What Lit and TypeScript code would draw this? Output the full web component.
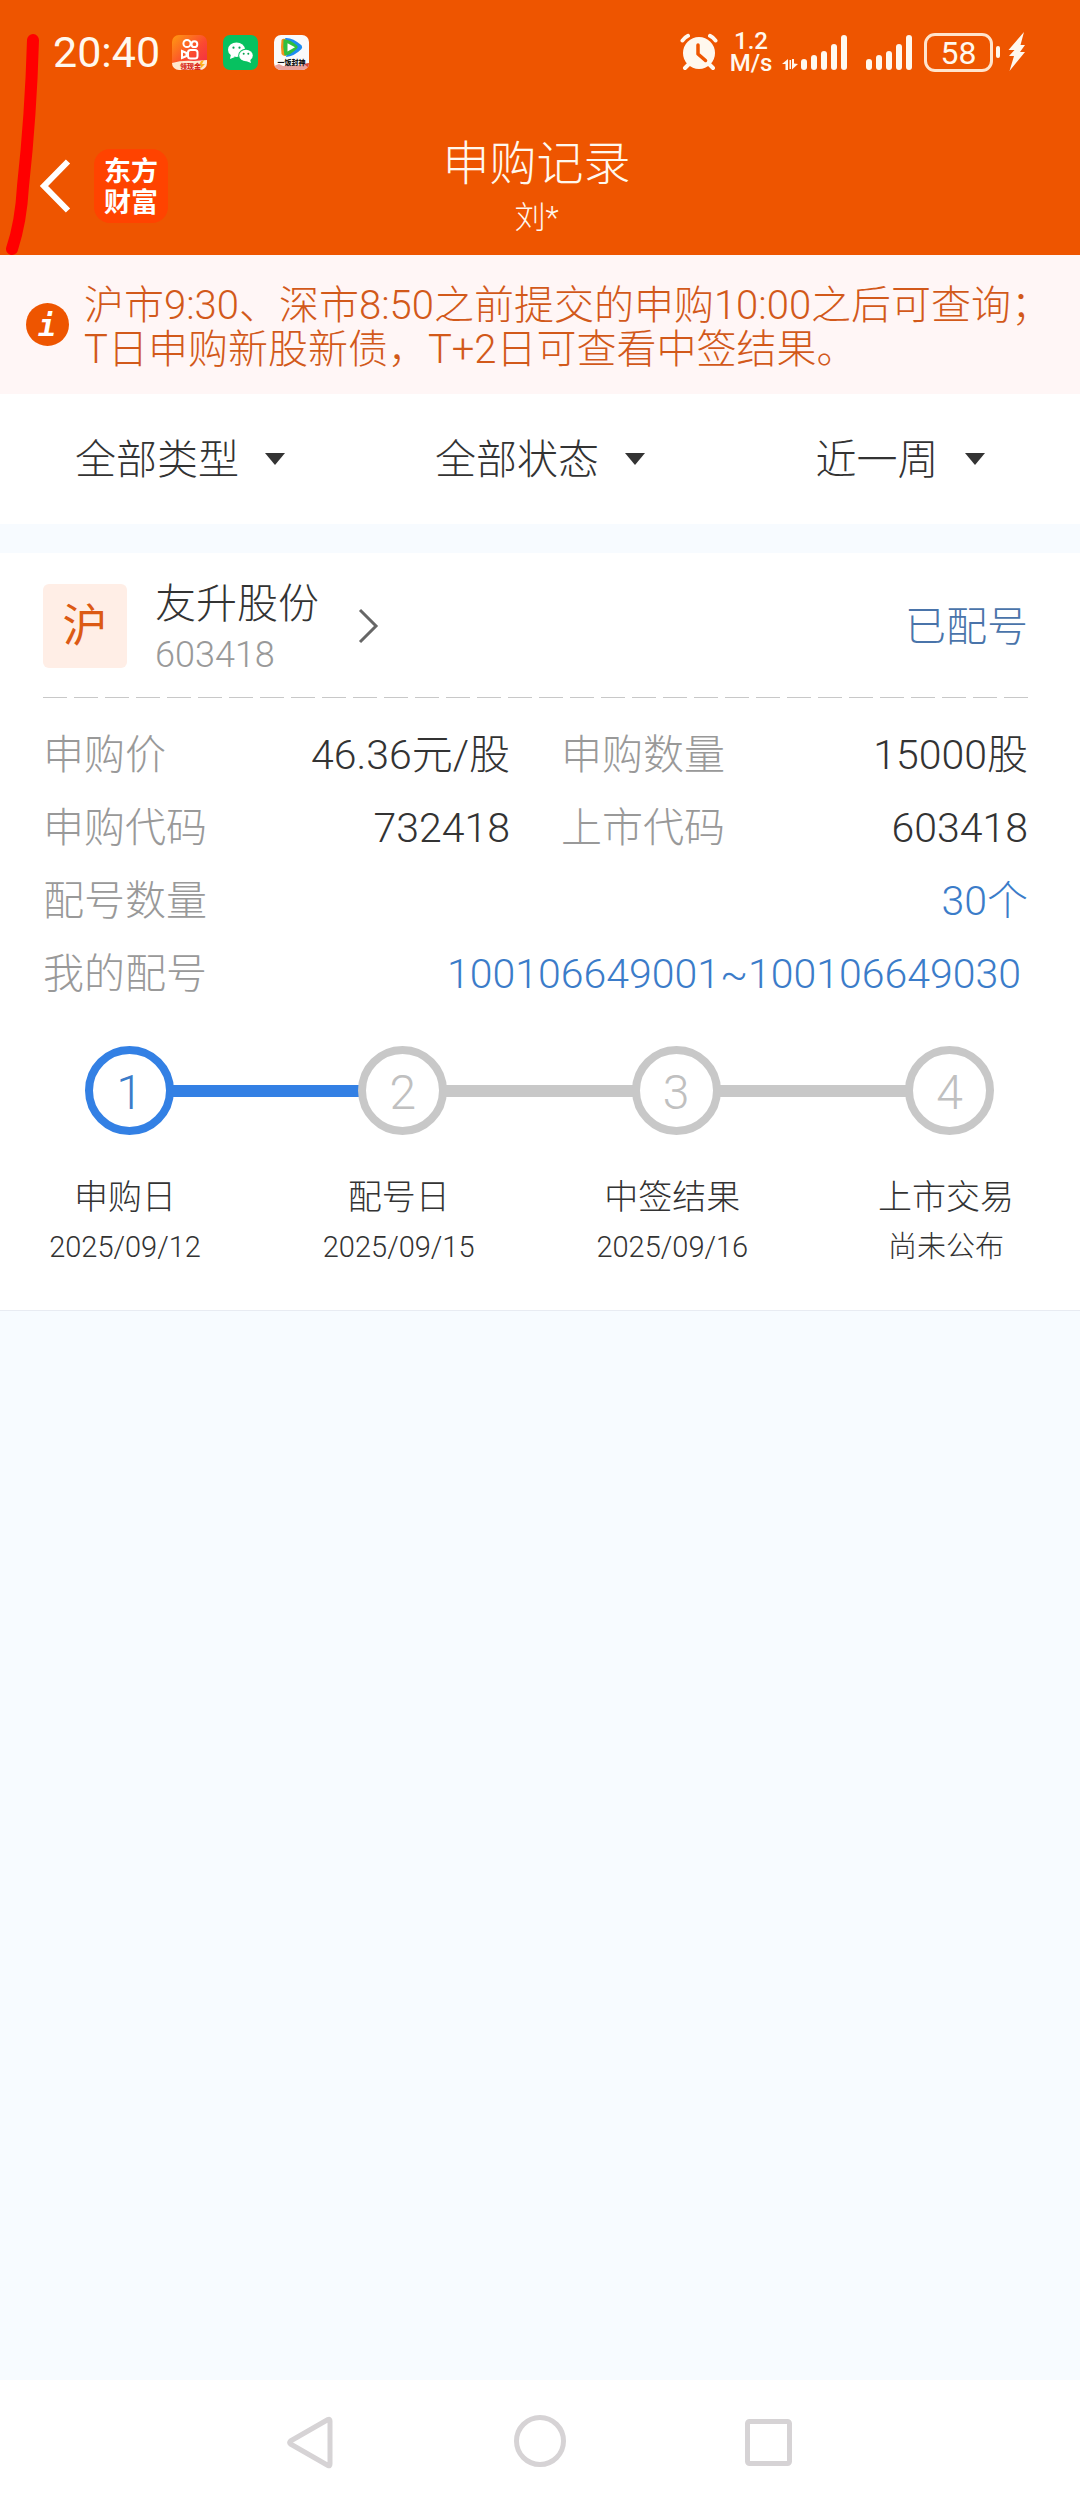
import { LitElement, html, css, svg } from "lit";
import { customElement } from "lit/decorators.js";

const FONT = css`Roboto, "Noto Sans CJK SC", sans-serif`;

/** Five rising signal bars, starting at the given x. */
const bars = (x: number) =>
  [58, 54, 50, 43, 34].map(
    (top, i) => svg`<rect x=${x + i * 10} y=${top - 32} width="6" height=${69 - top} rx="3"/>`
  );

@customElement("status-bar")
export class StatusBar extends LitElement {
  static styles = css`
    :host {
      display: flex;
      align-items: center;
      justify-content: space-between;
      height: 104px;
      padding: 0 52px 0 53px;
      color: #fff8ee;
    }
    .group {
      display: flex;
      align-items: center;
    }
    .apps {
      gap: 16px;
    }
    .time {
      font: 400 43px/50px ${FONT};
      margin-right: -4px;
    }
    .speed {
      width: 46px;
      margin: 0 8px 0 10px;
      font: 500 24px/22px Roboto, sans-serif;
      text-align: center;
    }
    .battery {
      box-sizing: border-box;
      width: 69px;
      height: 39px;
      margin-left: 12px;
      border: 3px solid #ffe4cc;
      border-radius: 11px;
      font: 400 32px/34px Roboto, sans-serif;
      text-align: center;
    }
    .mini {
      font-family: ${FONT};
      font-weight: 900;
    }
    svg {
      display: block;
      flex: none;
    }
  `;

  render() {
    return html`
      <div class="group apps">
        <span class="time">20:40</span>
        <svg width="35" height="35" viewBox="0 0 35 35">
          <defs>
            <linearGradient id="k" x1="0" y1="0" x2="1" y2="1">
              <stop offset="0" stop-color="#ff9a10" />
              <stop offset="0.55" stop-color="#fb4a30" />
              <stop offset="1" stop-color="#f0284a" />
            </linearGradient>
            <clipPath id="kc"><rect width="35" height="35" rx="7" /></clipPath>
          </defs>
          <g clip-path="url(#kc)">
            <rect width="35" height="35" fill="url(#k)" />
            <g fill="none" stroke="#fff" stroke-width="2">
              <circle cx="15" cy="8.5" r="3.6" />
              <circle cx="22.4" cy="9.2" r="2.9" />
              <rect x="16" y="15" width="9.5" height="8.5" rx="2.5" />
              <path d="M10 16l4.500 2v3l-4.500 2z" />
            </g>
            <path d="M0 28q10-3 22-2l13-1v10H0z" fill="#ffe9cf" />
            <path d="M29 26l3-1-2 4h3l-5 5 1-4h-2z" fill="#ffb020" />
            <text class="mini" x="8" y="34" font-size="7" fill="#d8281c">领现金</text>
          </g>
        </svg>
        <svg width="35" height="35" viewBox="0 0 35 35">
          <rect width="35" height="35" rx="7" fill="#07c160" />
          <path d="M8 19l-1 5 5-2z" fill="#fff" />
          <ellipse cx="13.500" cy="14.700" rx="8.500" ry="7.200" fill="#fff" />
          <ellipse cx="23" cy="20.500" rx="7.800" ry="6.800" fill="#07c160" />
          <path d="M27 24l1 4-5-2z" fill="#fff" />
          <ellipse cx="23" cy="20.500" rx="6.800" ry="5.800" fill="#fff" />
          <g fill="#07a050">
            <circle cx="10.500" cy="12.700" r="1.100" />
            <circle cx="16.500" cy="12.700" r="1.100" />
            <circle cx="20.700" cy="18.800" r="1" />
            <circle cx="25.300" cy="18.800" r="1" />
          </g>
        </svg>
        <svg width="35" height="35" viewBox="0 0 35 35">
          <defs><clipPath id="tc"><rect width="35" height="35" rx="7" /></clipPath></defs>
          <g clip-path="url(#tc)">
            <rect width="35" height="35" fill="#fafafa" />
            <path d="M7.500 5q1-2 4-1l3 1v14l-3 2q-3 0-4-2-1-7 0-14z" fill="#f5901e" />
            <path d="M11 3q7-1 16.500 7.200 1.400 2 0 3.800Q20 21.500 12 22q4-10-1-19z" fill="#1d8cf0" />
            <path d="M9.500 4.500Q16 4 23 10.500q1.500 1.500 0 3Q17 20 10.500 20.500 8.500 12 9.500 4.500z" fill="#2fbf3f" />
            <path d="M13.500 8.200l7.500 4-7.500 4.300z" fill="#fff" />
            <path d="M0 31l5-2 4 2 18-1 8-2v7H0z" fill="#e9a39c" />
            <path d="M30 29l5-1v5z" fill="#d8483c" />
            <text class="mini" x="3.500" y="30" font-size="7" fill="#111">一饭封神</text>
          </g>
        </svg>
      </div>

      <div class="group">
        <svg width="38" height="38" viewBox="0 0 38 38">
          <g fill="none" stroke="#fff8ee" stroke-width="4" stroke-linecap="round">
            <path d="M2.500 7.500Q4.500 4.500 8 2.800M35.500 7.500Q33.500 4.500 30 2.800M9 31l-4 4M29 31l4 4" />
          </g>
          <circle cx="19" cy="20" r="16" fill="#fff8ee" />
          <path d="M18 12v9l7.500 6.500" fill="none" stroke="#ee5500" stroke-width="3.500" stroke-linecap="round" stroke-linejoin="round" />
        </svg>
        <div class="speed">1.2<br />M/s</div>
        <svg width="130" height="38" viewBox="0 0 130 38" fill="currentColor">
          <path d="M0 31l6-5v11H3.500v-6zM16 31l-6 5.500V26h2v4.500zM7.500 27h1.500v9H7.500z" />
          ${bars(19)} ${bars(84)}
        </svg>
        <div class="battery">58</div>
        <svg width="35" height="40" viewBox="0 0 35 40" fill="currentColor">
          <rect x="3" y="14" width="4" height="12" rx="2" />
          <path d="M31 0L15.500 18h6L16 24h5l-4.500 15L32 20h-5l5-7h-4.500z" />
        </svg>
      </div>
    `;
  }
}

@customElement("title-bar")
export class TitleBar extends LitElement {
  static styles = css`
    :host {
      display: grid;
      grid-template-columns: 1fr auto 1fr;
      align-items: center;
      height: 151px;
      padding: 0 44px 0 37px;
      color: #fff8ee;
      font-family: ${FONT};
    }
    .left {
      display: flex;
      align-items: center;
      gap: 20px;
      padding-top: 12px;
    }
    .back {
      padding: 0;
      border: 0;
      background: none;
    }
    .back svg {
      display: block;
    }
    .logo {
      width: 74px;
      height: 74px;
      box-sizing: border-box;
      padding-top: 8px;
      border-radius: 16px;
      background: #ff4300;
      color: #fff;
      font-weight: 700;
      font-size: 27px;
      line-height: 31px;
      text-align: center;
    }
    .center {
      padding-top: 16px;
      text-align: center;
      font-weight: 300;
    }
    .title {
      margin: 0;
      font-weight: 300;
      font-size: 47px;
      line-height: 60px;
    }
    .user {
      font-size: 31px;
      line-height: 48px;
    }
  `;

  render() {
    return html`
      <div class="left">
        <button class="back" aria-label="返回">
          <svg width="37" height="54" viewBox="0 0 37 54">
            <path d="M31 2.500L7 27l24 24.500" fill="none" stroke="#fff" stroke-width="6" />
          </svg>
        </button>
        <div class="logo">东方<br />财富</div>
      </div>
      <div class="center">
        <h1 class="title">申购记录</h1>
        <div class="user">刘*</div>
      </div>
    `;
  }
}

@customElement("filter-bar")
export class FilterBar extends LitElement {
  static styles = css`
    :host {
      display: grid;
      grid-template-columns: repeat(3, 1fr);
      height: 130px;
      background: #fff;
    }
    .filter {
      display: flex;
      align-items: center;
      justify-content: center;
      gap: 26px;
    }
    .choice {
      appearance: none;
      margin: 0;
      padding: 2px 0 0;
      border: 0;
      background: none;
      color: #333;
      font: 300 41px/60px ${FONT};
    }
    .arrow {
      display: block;
    }
  `;

  render() {
    return ["全部类型", "全部状态", "近一周"].map(
      (name) => html`
        <label class="filter">
          <select class="choice" aria-label=${name}>
            <option>${name}</option>
          </select>
          <svg class="arrow" width="20" height="12" viewBox="0 0 20 12">
            <path d="M0 0h20L10 12z" fill="#333" />
          </svg>
        </label>
      `
    );
  }
}

@customElement("step-track")
export class StepTrack extends LitElement {
  static styles = css`
    :host {
      display: block;
      color: #333;
      font-family: ${FONT};
      font-weight: 300;
    }
    .track {
      display: flex;
      align-items: center;
      padding: 0 86px 0 85px;
    }
    .dot {
      flex: none;
      box-sizing: border-box;
      width: 89px;
      height: 89px;
      border: 8px solid #c8c8c8;
      border-radius: 50%;
      color: #c0c0c0;
      font-size: 48px;
      line-height: 78px;
      text-align: center;
    }
    .line {
      flex: 1;
      height: 12px;
      margin: 0 -2px;
      background: #c8c8c8;
    }
    .dot.on {
      border-color: #3380e4;
      color: #3b7cc9;
    }
    .line.on {
      background: #3380e4;
    }
    .labels {
      display: flex;
      justify-content: space-between;
      margin-top: 37px;
      padding: 0 44px 0 35px;
    }
    .step {
      width: 180px;
      text-align: center;
    }
    .name {
      font-size: 34px;
      line-height: 50px;
    }
    .date {
      font-size: 29px;
      line-height: 50px;
    }
  `;

  private steps = [
    ["申购日", "2025/09/12"],
    ["配号日", "2025/09/15"],
    ["中签结果", "2025/09/16"],
    ["上市交易", "尚未公布"],
  ];

  render() {
    return html`
      <div class="track">
        ${this.steps.map(
          (_, i) => html`
            ${i > 0 ? html`<div class="line ${i === 1 ? "on" : ""}"></div>` : ""}
            <div class="dot ${i === 0 ? "on" : ""}">${i + 1}</div>
          `
        )}
      </div>
      <div class="labels">
        ${this.steps.map(
          ([name, date]) => html`
            <div class="step">
              <div class="name">${name}</div>
              <div class="date">${date}</div>
            </div>
          `
        )}
      </div>
    `;
  }
}

@customElement("record-card")
export class RecordCard extends LitElement {
  static styles = css`
    :host {
      display: block;
      padding-bottom: 38px;
      border-bottom: 1px solid #e8ebf2;
      background: #fff;
      color: #333;
      font: 300 41px/60px ${FONT};
    }
    .head {
      display: flex;
      align-items: center;
      justify-content: space-between;
      height: 142px;
      padding: 2px 52px 0 43px;
    }
    .stock {
      display: flex;
      align-items: center;
      color: inherit;
      text-decoration: none;
    }
    .market {
      width: 84px;
      height: 84px;
      border-radius: 6px;
      background: #ffeee6;
      color: #dc5a14;
      font-weight: 400;
      font-size: 45px;
      line-height: 86px;
      text-align: center;
    }
    .names {
      margin-left: 28px;
      padding-top: 4px;
    }
    .name {
      line-height: 54px;
    }
    .code {
      color: #999;
      font-size: 36px;
      line-height: 48px;
    }
    .chevron {
      margin-left: 38px;
    }
    .state {
      padding-top: 2px;
      color: #4a74aa;
    }
    .rule {
      height: 1px;
      margin: 0 50px 0 43px;
      background: repeating-linear-gradient(90deg, #c8c8c8 0 24px, transparent 24px 31px);
    }
    .facts {
      display: grid;
      grid-template-columns: 467px 1fr;
      column-gap: 51px;
      row-gap: 13px;
      margin: 0;
      padding: 27px 52px 42px 43px;
    }
    .fact {
      display: flex;
      justify-content: space-between;
    }
    .wide {
      grid-column: 1 / -1;
    }
    .key {
      color: #999;
    }
    .value {
      margin: 0;
    }
    .blue {
      color: #3b7cc9;
    }
    .inset {
      padding-right: 7px;
    }
  `;

  private facts = [
    ["申购价", "46.36元/股", "", ""],
    ["申购数量", "15000股", "", ""],
    ["申购代码", "732418", "", ""],
    ["上市代码", "603418", "", ""],
    ["配号数量", "30个", "wide", "blue"],
    ["我的配号", "100106649001~100106649030", "wide", "blue inset"],
  ];

  render() {
    return html`
      <div class="head">
        <a class="stock" href="#">
          <span class="market">沪</span>
          <div class="names">
            <div class="name">友升股份</div>
            <div class="code">603418</div>
          </div>
          <svg class="chevron" width="22" height="36" viewBox="0 0 22 36">
            <path d="M3 2l16 16L3 34" fill="none" stroke="#666" stroke-width="3" />
          </svg>
        </a>
        <span class="state">已配号</span>
      </div>
      <div class="rule"></div>
      <dl class="facts">
        ${this.facts.map(
          ([key, value, span, tone]) => html`
            <div class="fact ${span}">
              <dt class="key">${key}</dt>
              <dd class="value ${tone}">${value}</dd>
            </div>
          `
        )}
      </dl>
      <step-track></step-track>
    `;
  }
}

@customElement("system-nav")
export class SystemNav extends LitElement {
  static styles = css`
    :host {
      display: flex;
      align-items: center;
      justify-content: center;
      gap: 169px;
      height: 124px;
      background: #fff;
    }
    .key {
      padding: 0;
      border: 0;
      background: none;
    }
    .icon {
      display: block;
      fill: none;
      stroke: #d6d3d5;
      stroke-width: 5;
      stroke-linejoin: round;
    }
  `;

  render() {
    return html`
      <button class="key" aria-label="返回">
        <svg class="icon" width="60" height="60" viewBox="0 0 60 60">
          <path d="M47 7.500Q49 6.500 49 9V52Q49 54.500 47 53.500L9.500 32Q8 30.500 9.500 29z" />
        </svg>
      </button>
      <button class="key" aria-label="主页">
        <svg class="icon" width="60" height="60" viewBox="0 0 60 60">
          <circle cx="30" cy="29" r="23.500" />
        </svg>
      </button>
      <button class="key" aria-label="最近">
        <svg class="icon" width="60" height="60" viewBox="0 0 60 60">
          <rect x="8.500" y="9.500" width="42" height="42" rx="2" />
        </svg>
      </button>
    `;
  }
}

@customElement("app-root")
export class AppRoot extends LitElement {
  static styles = css`
    :host {
      display: flex;
      flex-direction: column;
      position: relative;
      min-height: 100vh;
      background: #f7fbff;
    }
    .top {
      background: #ee5500;
    }
    .notice {
      display: flex;
      align-items: center;
      gap: 15px;
      padding: 25px 20px 26px 26px;
      background: #fff6f6;
      color: #d2591a;
      font: 300 40px/44px ${FONT};
      white-space: nowrap;
    }
    .text {
      margin: 4px 0 -4px;
    }
    .info {
      flex: none;
    }
    .letter {
      font: italic 700 30px "DejaVu Sans Mono", monospace;
    }
    .records {
      flex: 1;
      padding-top: 29px;
    }
    .mark {
      position: absolute;
      top: 0;
      left: 0;
      pointer-events: none;
    }
  `;

  render() {
    return html`
      <header class="top">
        <status-bar></status-bar>
        <title-bar></title-bar>
      </header>
      <div class="notice">
        <svg class="info" width="43" height="43" viewBox="0 0 43 43">
          <circle cx="21.500" cy="21.500" r="21.500" fill="#ee5500" />
          <text class="letter" x="21" y="33" fill="#fff" text-anchor="middle">i</text>
        </svg>
        <p class="text">
          沪市9:30、深市8:50之前提交的申购10:00之后可查询；<br />T日申购新股新债，T+2日可查看中签结果。
        </p>
      </div>
      <filter-bar></filter-bar>
      <main class="records">
        <record-card></record-card>
      </main>
      <system-nav></system-nav>
      <svg class="mark" width="60" height="262" viewBox="0 0 60 262">
        <path
          d="M33 40C31 110 27 150 23 186Q21 222 12 249"
          fill="none"
          stroke="#ff0000"
          stroke-width="12"
          stroke-linecap="round"
        />
      </svg>
    `;
  }
}
